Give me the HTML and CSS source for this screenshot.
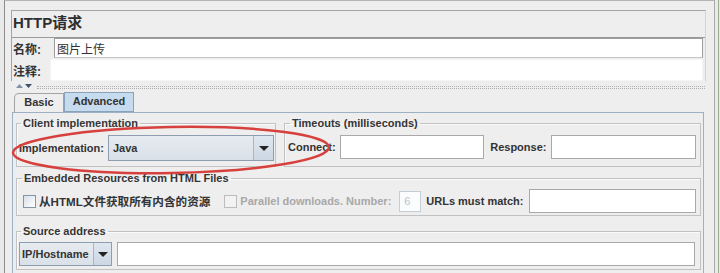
FILE: index.html
```html
<!DOCTYPE html>
<html lang="zh-CN">
<head>
    <meta charset="UTF-8">
    <meta name="viewport" content="width=device-width, initial-scale=1.0">
    <title>HTTP请求</title>
    <link rel="stylesheet" href="styles.css">
</head>
<body>

<div class="frame">

    <div class="head">
        <div class="head-title">HTTP请求</div>
        <div class="head-row name-row">
            <label for="name">名称:</label>
            <input type="text" id="name" class="name-input" value="图片上传">
        </div>
        <div class="head-row comment-row">
            <label for="comment">注释:</label>
            <input type="text" id="comment" class="comment-input">
        </div>
    </div>

    <div class="splitter">
        <svg class="arrows" width="17" height="6" viewBox="0 0 17 6">
            <polygon points="0,5 3.5,1 7,5" fill="#7f93a8"/>
            <polygon points="9,1 16,1 12.5,5" fill="#3f5068"/>
        </svg>
        <span class="dots"></span>
    </div>

    <div class="tabs">
        <div class="tab">Basic</div>
        <div class="tab active">Advanced</div>
    </div>

    <div class="tab-panel">
        <div class="row">
            <fieldset class="group client">
                <legend>Client implementation</legend>
                <div class="line">
                    <span class="lbl">Implementation:</span>
                    <div class="combo impl-combo">
                        <span class="combo-text">Java</span>
                        <span class="combo-btn"><i></i></span>
                    </div>
                </div>
            </fieldset>
            <fieldset class="group timeouts">
                <legend>Timeouts (milliseconds)</legend>
                <div class="line">
                    <span class="lbl">Connect:</span>
                    <input type="text" class="box timeout connect">
                    <span class="lbl">Response:</span>
                    <input type="text" class="box timeout response">
                </div>
            </fieldset>
        </div>

        <fieldset class="group embedded">
            <legend>Embedded Resources from HTML Files</legend>
            <div class="line">
                <span class="check"></span>
                <span class="check-text cjk">从HTML文件获取所有内含的资源</span>
                <span class="check disabled"></span>
                <span class="check-text muted">Parallel downloads. Number:</span>
                <input type="text" class="box small" value="6" disabled>
                <span class="lbl urls">URLs must match:</span>
                <input type="text" class="box url">
            </div>
        </fieldset>

        <fieldset class="group source">
            <legend>Source address</legend>
            <div class="line">
                <div class="combo ip-combo">
                    <span class="combo-text">IP/Hostname</span>
                    <span class="combo-btn"><i></i></span>
                </div>
                <input type="text" class="box source-input">
            </div>
        </fieldset>
    </div>

</div>

<!-- hand drawn highlight over the implementation row -->
<svg class="mark" width="720" height="273" viewBox="0 0 720 273">
    <ellipse cx="171" cy="150" rx="158" ry="23" transform="rotate(-1 171 150)" fill="none" stroke="#d7413d" stroke-width="2.5"/>
</svg>

</body>
</html>
```

FILE: styles.css
```css
* {
    box-sizing: border-box;
}

body {
    margin: 0;
    height: 273px;
    overflow: hidden;
    background-color: #e9e9e9;
    font-family: "Liberation Sans", Arial, "Noto Sans CJK SC", sans-serif;
    font-size: 11px;
    font-weight: bold;
    color: #333;
}

.frame {
    margin-left: 4px;
    width: 711px;
    height: 273px;
    padding: 9px 8px 0 6px;
    background-color: #eeeeee;
    border-top: 1px solid #b4b4b4;
    border-left: 1px solid #8c8c8c;
    border-right: 1px solid #a9a9a9;
    box-shadow: 3px 0 0 #e8ebe6, 4px 0 0 #9bab8f;
}

/* header block */
.head {
    border: 1px solid #a5a5a5;
    border-right-color: #d4d4d4;
    border-bottom: none;
}

.head-title {
    height: 27px;
    padding: 1px 0 0 1px;
    font-size: 15px;
    line-height: 22px;
    color: #2f2f2f;
    border-bottom: 1px solid #9a9a9a;
}

.head-row {
    display: flex;
    align-items: center;
}

.head-row label {
    padding-left: 1px;
    font-size: 12px;
    font-family: "Liberation Sans", "Noto Sans CJK SC", sans-serif;
}

.head-row input {
    flex: 1;
    min-width: 0;
    margin-right: 2px;
    font-family: "Liberation Sans", "Noto Sans CJK SC", sans-serif;
    font-size: 12px;
    font-weight: normal;
    color: #333;
    background-color: #fff;
    outline: none;
}

.name-row {
    height: 20px;
}

.name-row label {
    width: 42px;
}

.name-input {
    height: 20px;
    padding: 0 2px;
    border: 1px solid #9c9c9c;
    border-bottom-color: #c6c6c6;
}

.comment-row {
    height: 23px;
    padding-top: 1px;
}

.comment-row label {
    width: 38px;
}

.comment-input {
    height: 22px;
    border: 1px solid #f4f4f4;
}

/* divider with the little collapse arrows */
.splitter {
    display: flex;
    align-items: center;
    height: 10px;
    padding-left: 5px;
}

.arrows {
    display: block;
    margin-top: -1px;
}

.dots {
    flex: 1;
    height: 3px;
    margin: 2px 1px 0 4px;
    border-top: 1px dotted #b0b0b0;
    border-bottom: 1px dotted #b0b0b0;
}

/* tabs */
.tabs {
    display: flex;
    align-items: flex-end;
    margin-left: 3px;
    height: 21px;
}

.tab {
    height: 19px;
    padding: 2px 0 0;
    text-align: center;
    border: 1px solid #a3a3a3;
    border-bottom: none;
    border-radius: 5px 0 0 0;
    background-color: #eeeeee;
    color: #333;
}

.tab:first-child {
    width: 50px;
}

.tab.active {
    width: 70px;
    height: 20px;
    border-color: #89a3bd;
    border-radius: 0;
    background-color: #c7dbee;
    border-bottom: 1px solid #89a3bd;
}

.tab-panel {
    margin: 0 2px 0 1px;
    height: 170px;
    padding: 4px 2px 0 3px;
    border: 1px solid #9db0c4;
    border-bottom: none;
}

/* titled groups */
.row {
    display: flex;
    gap: 8px;
}

.group {
    margin: 0;
    min-width: 0;
    padding: 5px 2px 5px 2px;
    border: 1px solid #c2c2c2;
    box-shadow: inset 1px 1px 0 #fafafa;
}

.group legend {
    margin-left: 2px;
    padding: 0 2px;
    line-height: 13px;
    color: #353535;
}

.line {
    display: flex;
    align-items: center;
}

.lbl {
    white-space: nowrap;
}

.client {
    width: 260px;
    flex: none;
    padding-right: 1px;
}

.client .line {
    justify-content: space-between;
}

.timeouts {
    flex: 1;
    padding: 5px 4px 5px 3px;
}

.box {
    height: 24px;
    min-width: 0;
    background-color: #fff;
    border: 1px solid #a9a9a9;
    outline: none;
    font-family: "Liberation Sans", Arial, sans-serif;
}

.connect {
    flex: 1;
    width: 0;
    margin: 0 6px 0 4px;
}

.response {
    flex: 1;
    width: 0;
    margin-left: 5px;
}

/* combo boxes */
.combo {
    display: flex;
    height: 26px;
    border: 1px solid #8e9eb0;
    background: linear-gradient(#e6ebf0, #d9e0e8);
}

.combo-text {
    flex: 1;
    padding: 6px 0 0 4px;
}

.combo-btn {
    width: 20px;
    border-left: 1px solid #a8b6c6;
    background: linear-gradient(#dfe7f0, #cbd7e4);
    display: flex;
    align-items: center;
    justify-content: center;
}

.combo-btn i {
    width: 0;
    height: 0;
    border-left: 5px solid transparent;
    border-right: 5px solid transparent;
    border-top: 5px solid #222;
}

.impl-combo {
    width: 166px;
}

/* embedded resources */
.embedded {
    margin-top: 5px;
    padding: 4px 4px 2px 3px;
}

.check {
    flex: none;
    width: 13px;
    height: 13px;
    margin-left: 3px;
    border: 1px solid #8595a8;
    background: linear-gradient(135deg, #d8e0e9, #ffffff);
}

.check.disabled {
    margin-left: 14px;
    border-color: #bcbcbc;
    background: #f2f2f2;
}

.check-text {
    margin-left: 3px;
    font-family: "Liberation Sans", "Noto Sans CJK SC", sans-serif;
    white-space: nowrap;
}

.check-text.cjk {
    font-size: 11.6px;
}

.check-text.muted {
    color: #a8a8a8;
}

.small {
    flex: none;
    width: 22px;
    height: 21px;
    margin-left: 8px;
    padding: 0 4px;
    border-color: #c4ccd4;
    font-size: 11px;
    color: #b8c4d0;
    background-color: #fbfcfd;
}

.urls {
    margin-left: 5px;
}

.url {
    flex: 1;
    width: 0;
    margin-left: 5px;
}

/* source address */
.source {
    margin-top: 9px;
    padding: 4px 5px 3px 2px;
}

.ip-combo {
    width: 93px;
    height: 24px;
}

.ip-combo .combo-text {
    padding: 5px 0 0 2px;
}

.ip-combo .combo-btn {
    width: 18px;
}

.source-input {
    flex: 1;
    width: 0;
    margin-left: 5px;
}

.mark {
    position: absolute;
    top: 0;
    left: 0;
    pointer-events: none;
}
```
